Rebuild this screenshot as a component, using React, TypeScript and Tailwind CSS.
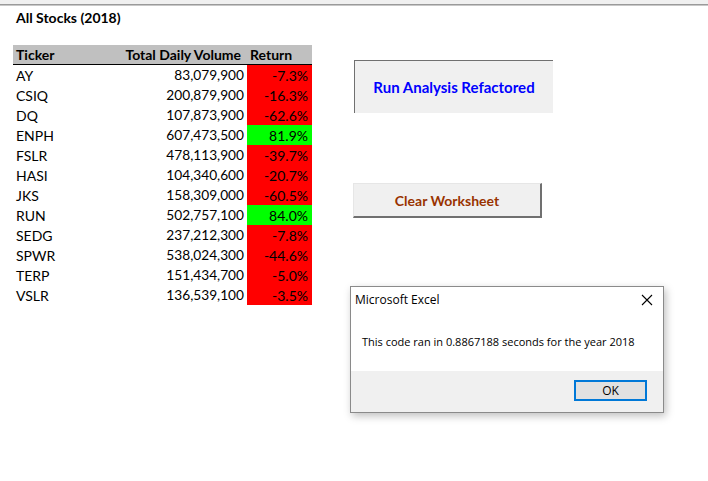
const rows: [string, string, string, boolean][] = [
  ["AY", "83,079,900", "-7.3%", false],
  ["CSIQ", "200,879,900", "-16.3%", false],
  ["DQ", "107,873,900", "-62.6%", false],
  ["ENPH", "607,473,500", "81.9%", true],
  ["FSLR", "478,113,900", "-39.7%", false],
  ["HASI", "104,340,600", "-20.7%", false],
  ["JKS", "158,309,000", "-60.5%", false],
  ["RUN", "502,757,100", "84.0%", true],
  ["SEDG", "237,212,300", "-7.8%", false],
  ["SPWR", "538,024,300", "-44.6%", false],
  ["TERP", "151,434,700", "-5.0%", false],
  ["VSLR", "136,539,100", "-3.5%", false],
]

function StockTable() {
  return (
    <div className="w-[299px] text-[14px] text-black">
      <div className="flex h-[20px] items-center bg-[#c0c0c0] border-b border-black font-bold">
        <div className="w-[97px] pl-[3px]">Ticker</div>
        <div className="w-[137px] text-right pr-[6px]">Total Daily Volume</div>
        <div className="w-[65px] pl-[3px]">Return</div>
      </div>
      {rows.map(([t, v, r, up]) => (
        <div key={t} className="flex h-[20px] items-center">
          <div className="w-[97px] pl-[3px]">{t}</div>
          <div className="w-[137px] text-right pr-[3px] text-[13.7px]">{v}</div>
          <div
            className={
              "w-[65px] h-full flex items-center justify-end pr-[4px] " +
              (up ? "bg-[#00ff00]" : "bg-[#ff0000]")
            }
          >
            {r}
          </div>
        </div>
      ))}
    </div>
  )
}

function MessageBox() {
  return (
    <div
      className="absolute left-[350px] top-[286px] w-[314px] h-[127px] bg-white border border-[#8a8a8a] shadow-[2px_3px_8px_rgba(0,0,0,0.25)] flex flex-col text-[12px] text-black"
      style={{ fontFamily: '"Open Sans", "Noto Sans", sans-serif' }}
    >
      <div className="flex items-center justify-between h-[24px] pl-[4px] pr-[10px] pt-[1px]">
        <span>Microsoft Excel</span>
        <svg width="12" height="12" viewBox="0 0 12 12" className="mt-[1px]">
          <path d="M1 1 L11 11 M11 1 L1 11" stroke="#000" strokeWidth="1.1" fill="none" />
        </svg>
      </div>
      <div className="h-[60px] flex items-center pl-[11px] pt-[2px] text-[11px]">
        This code ran in 0.8867188 seconds for the year 2018
      </div>
      <div className="flex-1 bg-[#f0f0f0] flex justify-end items-start pt-[9px] pr-[16px]">
        <button className="w-[73px] h-[21px] bg-[#e1e1e1] border-2 border-[#0078d7] flex items-center justify-center text-[12px] leading-none">
          OK
        </button>
      </div>
    </div>
  )
}

export default function App() {
  return (
    <div
      className="relative w-[708px] h-[481px] bg-white overflow-hidden"
      style={{ fontFamily: "Lato, Carlito, Calibri, sans-serif" }}
    >
      <div className="h-[4px] bg-[#f0f0f0]" />
      <div className="h-[1px] bg-[#9a9a9a]" />
      <div className="h-[1px] bg-[#c8c8c8]" />
      <div className="h-[39px] pl-[16px] pt-[1px] text-[14px] font-bold text-black">All Stocks (2018)</div>
      <div className="flex pl-[13px]">
        <StockTable />
        <div className="ml-[41px] flex flex-col">
          <button className="mt-[15px] w-[199px] h-[53px] bg-[#f0f0f0] border-t border-l border-[#707070] flex items-center justify-center text-[15px] font-bold text-[#0000ff] ml-[1px]">
            Run Analysis Refactored
          </button>
          <button className="mt-[70px] w-[189px] h-[35px] bg-[#f0f0f0] border-t border-l border-t-[#e6e6e6] border-l-[#e6e6e6] border-r-2 border-b-2 border-r-[#707070] border-b-[#707070] flex items-center justify-center text-[14px] font-bold text-[#993300]">
            Clear Worksheet
          </button>
        </div>
      </div>
      <MessageBox />
    </div>
  )
}
